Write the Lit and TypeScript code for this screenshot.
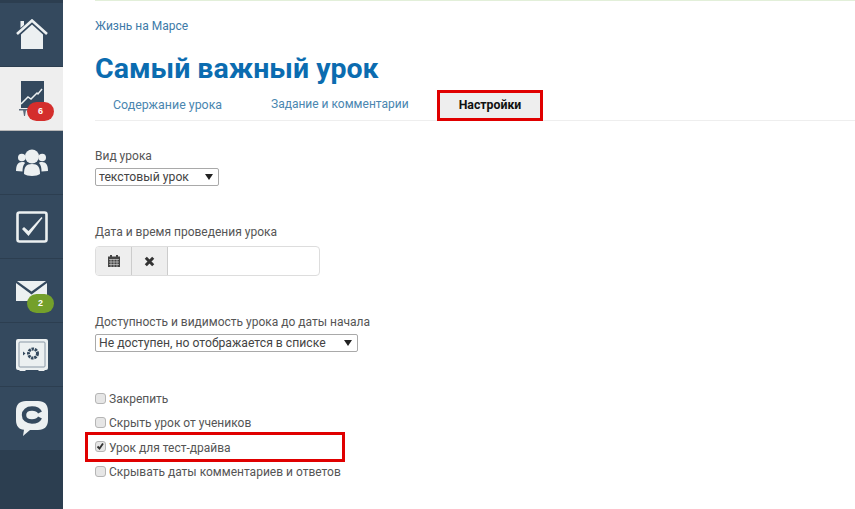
import { LitElement, html, css, svg } from "lit";
import { customElement } from "lit/decorators.js";

const F = "#ecf0f1";
const icons = {
  home: svg`<svg width="32" height="32" viewBox="0 0 32 32"><path d="M1 15 16 1.500 31 15" fill="none" stroke="${F}" stroke-width="2.600"/><path d="M4.500 2h3.500v4l-3.500 3z" fill="${F}"/><path d="M5 15.500 16 5.500l11 10V30H5z" fill="${F}"/></svg>`,
  board: svg`<svg width="26" height="36" viewBox="0 0 26 36"><rect x="2" width="23" height="27" fill="#34495e"/><path d="M2 23 9 16l3 2 6-6 1 1 4-5" fill="none" stroke="${F}" stroke-width="1.500"/><path d="M0 28h20v1.500H0zM4 29h3l-1 6H5z" fill="#5b6b7c"/></svg>`,
  group: svg`<svg width="32" height="28" viewBox="0 0 32 28"><circle cx="16" cy="7.500" r="7" fill="${F}"/><circle cx="5.800" cy="8.500" r="3.800" fill="${F}"/><circle cx="26.200" cy="8.500" r="3.800" fill="${F}"/><path d="M0 22c0-6 2-9 6-9 2 0 3 .5 3 1-2 2-2.500 5-2.500 8.500zM32 22c0-6-2-9-6-9-2 0-3 .5-3 1 2 2 2.500 5 2.500 8.500z" fill="${F}"/><path d="M8 25c0-7 2-10 8-10s8 3 8 10c-3 2.500-13 2.500-16 0z" fill="${F}"/></svg>`,
  check: svg`<svg width="32" height="32" viewBox="0 0 32 32"><rect x="1.500" y="1.500" width="29" height="29" rx="2" fill="none" stroke="${F}" stroke-width="2.600"/><path d="M6 18l2-2 4.500 4L25.500 6l1 1L12.500 25z" fill="${F}"/></svg>`,
  mail: svg`<svg width="31" height="20" viewBox="0 0 31 20"><path d="M1 0h29L15.500 10.500z" fill="${F}"/><path d="M0 2 15.500 13.500 31 2v18H0z" fill="${F}"/></svg>`,
  safe: svg`<svg width="32" height="32" viewBox="0 0 32 32"><path d="M2 0h28a2 2 0 0 1 2 2v27a2 2 0 0 1-2 2h-1l-1 1h-5l-1-1H10l-1 1H4l-1-1H2a2 2 0 0 1-2-2V2a2 2 0 0 1 2-2z" fill="${F}"/><rect x="3" y="3" width="26" height="25" rx="1" fill="none" stroke="#8a98a6" stroke-width="1"/><circle cx="17" cy="14.500" r="4.500" fill="none" stroke="#34495e" stroke-width="3" stroke-dasharray="2.400 .8"/><path d="M7 12.500l2.500 2L7 16.500z" fill="#34495e"/></svg>`,
  chat: svg`<svg width="32" height="35" viewBox="0 0 32 35"><path d="M10 0h12c6.500 0 10 3.500 10 10v9c0 6.500-3.500 10-10 10h-8l-7 6 1-6.200C3 28.500 0 25 0 19v-9C0 3.500 3.500 0 10 0z" fill="${F}"/><path d="M24 11.500C22.500 8.500 19.500 7.500 16 7.500c-5 0-8 2.700-8 6.500s3 6.500 8 6.500c3.500 0 6.500-1 8-4" fill="none" stroke="#34495e" stroke-width="4.400"/></svg>`,
};

@customElement("app-root")
export class AppRoot extends LitElement {
  static styles = css`
    :host {
      display: flex;
      width: 855px;
      height: 509px;
      overflow: hidden;
      background: #fff;
      font-family: Roboto, "Noto Sans", sans-serif;
      font-size: 12px;
      color: #555;
    }
    .side {
      width: 63px;
      flex: none;
      display: flex;
      flex-direction: column;
      background: #2c3e50;
      padding-top: 3px;
    }
    .item {
      position: relative;
      height: 63px;
      flex: none;
      display: flex;
      align-items: center;
      justify-content: center;
      background: #34495e;
      border-bottom: 1px solid #2c3e50;
    }
    .item.active {
      background: #eee;
      border-bottom: 1px solid #b8b8b8;
    }
    .badge {
      position: absolute;
      left: 27px;
      top: 35px;
      width: 27px;
      height: 19px;
      border-radius: 10px;
      color: #fff;
      font: bold 9px/19px "Liberation Sans", sans-serif;
      text-align: center;
    }
    .badge.red { background: #d42e2c; }
    .badge.green { background: #74a02b; }
    .main {
      flex: 1;
      min-width: 0;
      padding-left: 32px;
      display: flex;
      flex-direction: column;
    }
    .topline { height: 1px; background: #e2efd9; }
    .crumb {
      margin-top: 16px;
      height: 18px;
      line-height: 18px;
      color: #3d7aa8;
    }
    h1 {
      margin: 18px 0 0;
      height: 32px;
      line-height: 32px;
      font-size: 28.500px;
      font-weight: 700;
      color: #0b6cb0;
    }
    .tabs {
      display: flex;
      margin-top: 6px;
      height: 29px;
      border-bottom: 1px solid #eee;
      align-items: stretch;
    }
    .tab {
      color: #4a86b0;
      line-height: 27px;
      height: 29px;
      white-space: nowrap;
    }
    .t1 { margin-left: 18px; width: 158px; font-size: 12.400px; }
    .t2 { width: 166px; }
    .t3 {
      box-sizing: border-box;
      width: 106px;
      height: 31px;
      margin-top: -1px;
      border: 3px solid #e00000;
      background: #eee;
      color: #111;
      font-size: 12.300px;
      font-weight: 700;
      line-height: 24px;
      text-align: center;
    }
    .label { line-height: 18px; height: 18px; white-space: nowrap; }
    .l1 { margin-top: 26px; }
    .l2 { margin-top: 37px; }
    .l3 { margin-top: 37px; }
    .sel {
      box-sizing: border-box;
      display: flex;
      align-items: center;
      justify-content: space-between;
      height: 18px;
      border: 1px solid #a9a9a9;
      border-radius: 2px;
      padding: 0 5px 0 3px;
      margin-top: 3px;
      color: #444;
      font-size: 12.200px;
      line-height: 15px;
      white-space: nowrap;
    }
    .s1 { width: 124px; }
    .s2 { width: 263px; }
    .arrow { width: 8px; height: 6px; flex: none; fill: #222; }
    .group {
      display: flex;
      box-sizing: border-box;
      width: 225px;
      height: 30px;
      margin-top: 5px;
      border: 1px solid #ddd;
      border-radius: 4px;
      overflow: hidden;
    }
    .addon {
      width: 35px;
      flex: none;
      background: #eee;
      border-right: 1px solid #ccc;
      display: flex;
      align-items: center;
      justify-content: center;
    }
    .checks { margin-top: 35px; display: flex; flex-direction: column; width: 260px; }
    .check {
      position: relative;
      display: flex;
      align-items: center;
      gap: 3px;
      height: 24.300px;
      white-space: nowrap;
    }
    .box {
      box-sizing: border-box;
      width: 11px;
      height: 11px;
      flex: none;
      margin-top: -2px;
      border: 1px solid #b5b5b5;
      border-radius: 3px;
      background: #e6e6e6;
      display: flex;
    }
    .mark {
      position: absolute;
      left: -10px;
      top: -4px;
      width: 260px;
      height: 30px;
      box-sizing: border-box;
      border: 3px solid #e00000;
    }
  `;

  render() {
    const arrow = html`<svg class="arrow" viewBox="0 0 8 6"><path d="M0 0h8L4 6z" /></svg>`;
    return html`
      <nav class="side">
        <div class="item">${icons.home}</div>
        <div class="item active">${icons.board}<span class="badge red">6</span></div>
        <div class="item">${icons.group}</div>
        <div class="item">${icons.check}</div>
        <div class="item">${icons.mail}<span class="badge green">2</span></div>
        <div class="item">${icons.safe}</div>
        <div class="item">${icons.chat}</div>
      </nav>
      <main class="main">
        <div class="topline"></div>
        <div class="crumb">Жизнь на Марсе</div>
        <h1>Самый важный урок</h1>
        <div class="tabs">
          <div class="tab t1">Содержание урока</div>
          <div class="tab t2">Задание и комментарии</div>
          <div class="tab t3">Настройки</div>
        </div>
        <div class="label l1">Вид урока</div>
        <div class="sel s1"><span>текстовый урок</span>${arrow}</div>
        <div class="label l2">Дата и время проведения урока</div>
        <div class="group">
          <div class="addon">
            <svg width="12" height="12" viewBox="0 0 12 12"><path d="M2 0h2v1.500h4V0h2v1.500h2V12H0V1.500h2z" fill="#444"/><path d="M1 4.500h10M1 7h10M1 9.500h10M3 4v8M6 4v8M9 4v8" stroke="#ddd" stroke-width=".6"/></svg>
          </div>
          <div class="addon">
            <svg width="11" height="11" viewBox="0 0 11 11"><path d="M1.800 1.800l7.400 7.400M9.200 1.800l-7.400 7.400" stroke="#333" stroke-width="3"/></svg>
          </div>
        </div>
        <div class="label l3">Доступность и видимость урока до даты начала</div>
        <div class="sel s2"><span>Не доступен, но отображается в списке</span>${arrow}</div>
        <div class="checks">
          <div class="check"><span class="box"></span>Закрепить</div>
          <div class="check"><span class="box"></span>Скрыть урок от учеников</div>
          <div class="check">
            <span class="box"><svg width="9" height="9" viewBox="0 0 9 9"><path d="M1.500 4.500l2 2 3.500-5" fill="none" stroke="#333" stroke-width="1.800"/></svg></span>Урок для тест-драйва
            <span class="mark"></span>
          </div>
          <div class="check"><span class="box"></span>Скрывать даты комментариев и ответов</div>
        </div>
      </main>
    `;
  }
}
